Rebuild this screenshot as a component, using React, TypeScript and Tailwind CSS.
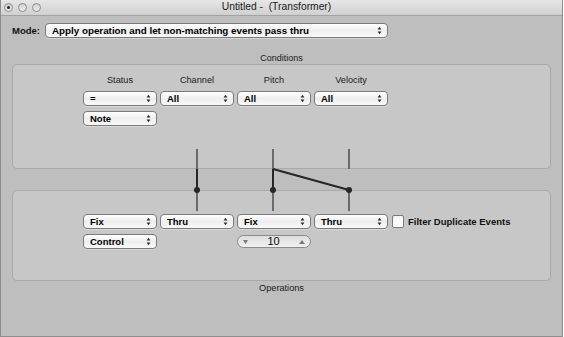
import React from "react";

function Arrows() {
  return (
    <svg width="5" height="9" viewBox="0 0 5 9" className="shrink-0">
      <path d="M0.6 3.4 L2.5 0.8 L4.4 3.4 Z" fill="#2a2a2a" />
      <path d="M0.6 5.6 L2.5 8.2 L4.4 5.6 Z" fill="#2a2a2a" />
    </svg>
  );
}

function Popup({
  label,
  className = "w-[74px]",
  text = "text-[9.5px]",
}: {
  label: string;
  className?: string;
  text?: string;
}) {
  return (
    <div
      className={`${className} h-[15px] rounded-[4px] border border-[#7a7a7a] bg-linear-to-b from-[#ffffff] via-[#eeeeee] to-[#f9f9f9] shadow-[0_1px_0_rgba(255,255,255,0.35)] flex items-center pl-[6px] pr-[5px]`}
    >
      <span className={`flex-1 ${text} font-bold leading-none text-black whitespace-pre`}>{label}</span>
      <Arrows />
    </div>
  );
}

function Light({ dot }: { dot?: boolean }) {
  return (
    <div className="w-[9px] h-[9px] rounded-full border border-[#8c8c8c] bg-linear-to-b from-[#cfcfcf] to-[#eeeeee] flex items-center justify-center">
      {dot && <div className="w-[3px] h-[3px] rounded-full bg-[#222]" />}
    </div>
  );
}

export default function App() {
  return (
    <div className="w-[564px] h-[337px] bg-white">
      <div className="relative w-[563px] h-[337px] bg-[#bebebe] border-x border-b border-[#8e8e8e] flex flex-col font-['Liberation_Sans',Arial,sans-serif] text-[#111]">
        {/* title bar */}
        <div className="relative h-[16px] shrink-0 bg-linear-to-b from-[#e6e6e6] to-[#d0d0d0] border-b border-[#a2a2a2] flex items-center justify-center pr-[10px]">
          <div className="absolute left-[3px] top-[3px] flex gap-[5px]">
            <Light dot />
            <Light />
            <Light />
          </div>
          <span className="text-[10.3px] leading-none text-[#1a1a1a] whitespace-pre">Untitled -  (Transformer)</span>
        </div>

        {/* mode row */}
        <div className="flex items-center h-[15px] mt-[7px] pl-[11px] shrink-0">
          <span className="w-[33px] text-[9.5px] font-bold leading-none">Mode:</span>
          <Popup
            label="Apply operation and let non-matching events pass thru"
            className="w-[343px]"
            text="text-[9.8px]"
          />
        </div>

        <div className="h-[12px] mt-[14px] shrink-0 flex items-center justify-center text-[9px] leading-none text-[#1a1a1a]">
          Conditions
        </div>

        {/* conditions panel */}
        <div className="ml-[11px] w-[539px] h-[105px] shrink-0 rounded-[5px] border border-[#a9a9a9] bg-[#c7c7c7] pl-[70px] pt-[10px]">
          <div className="grid grid-cols-[74px_74px_74px_74px] gap-x-[3px]">
            <div className="h-[11px] flex items-center justify-center text-[9.2px] leading-none text-[#1a1a1a]">Status</div>
            <div className="h-[11px] flex items-center justify-center text-[9.2px] leading-none text-[#1a1a1a]">Channel</div>
            <div className="h-[11px] flex items-center justify-center text-[9.2px] leading-none text-[#1a1a1a]">Pitch</div>
            <div className="h-[11px] flex items-center justify-center text-[9.2px] leading-none text-[#1a1a1a]">Velocity</div>
          </div>
          <div className="grid grid-cols-[74px_74px_74px_74px] gap-x-[3px] gap-y-[5px] mt-[5px]">
            <Popup label="=" />
            <Popup label="All" />
            <Popup label="All" />
            <Popup label="All" />
            <Popup label="Note" />
          </div>
        </div>

        {/* operations panel */}
        <div className="ml-[11px] mt-[21px] w-[539px] h-[91px] shrink-0 rounded-[5px] border border-[#a9a9a9] bg-[#c7c7c7] pl-[70px] pt-[23px]">
          <div className="flex items-center gap-x-[3px]">
            <Popup label="Fix" />
            <Popup label="Thru" />
            <Popup label="Fix" />
            <Popup label="Thru" />
            <div className="ml-[1px] w-[12px] h-[13px] rounded-[2px] border border-[#7a7a7a] bg-linear-to-b from-[#f4f4f4] to-[#ffffff]" />
            <span className="ml-[1px] text-[9.5px] font-bold leading-none">Filter Duplicate Events</span>
          </div>
          <div className="grid grid-cols-[74px_74px_74px_74px] gap-x-[3px] mt-[5px] h-[15px]">
            <Popup label="Control" />
            <div />
            <div className="self-center h-[13px] rounded-full border border-[#8a8a8a] bg-linear-to-b from-[#dedede] to-[#f0f0f0] flex items-center justify-between px-[5px]">
              <svg width="5" height="4" viewBox="0 0 5 4">
                <path d="M0 0 L5 0 L2.5 4 Z" fill="#7a7a7a" />
              </svg>
              <span className="text-[11px] leading-none text-[#0a0a0a]">10</span>
              <svg width="6" height="4" viewBox="0 0 6 4">
                <path d="M0 4 L6 4 L3 0 Z" fill="#7a7a7a" />
              </svg>
            </div>
          </div>
        </div>

        <div className="h-[12px] mt-[2px] shrink-0 flex items-center justify-center text-[9.2px] leading-none text-[#1a1a1a]">
          Operations
        </div>

        {/* connection lines */}
        <svg className="absolute left-[-1px] top-0 pointer-events-none" width="564" height="337" viewBox="0 0 564 337">
          <g strokeWidth="2" fill="none">
            <line x1="197" y1="149" x2="197" y2="169" stroke="#6a6a6a" />
            <line x1="197" y1="169" x2="197" y2="190" stroke="#262626" />
            <line x1="197" y1="190" x2="197" y2="211" stroke="#6a6a6a" />
            <line x1="273" y1="149" x2="273" y2="169" stroke="#6a6a6a" />
            <line x1="273" y1="169" x2="273" y2="190" stroke="#262626" />
            <line x1="273" y1="190" x2="273" y2="211" stroke="#6a6a6a" />
            <line x1="349" y1="149" x2="349" y2="169" stroke="#6a6a6a" />
            <line x1="349" y1="190" x2="349" y2="211" stroke="#6a6a6a" />
            <line x1="273" y1="169" x2="349" y2="190" stroke="#262626" />
          </g>
          <circle cx="197" cy="190" r="3" fill="#262626" />
          <circle cx="273" cy="190" r="3" fill="#262626" />
          <circle cx="349" cy="190" r="3" fill="#262626" />
        </svg>
      </div>
    </div>
  );
}
